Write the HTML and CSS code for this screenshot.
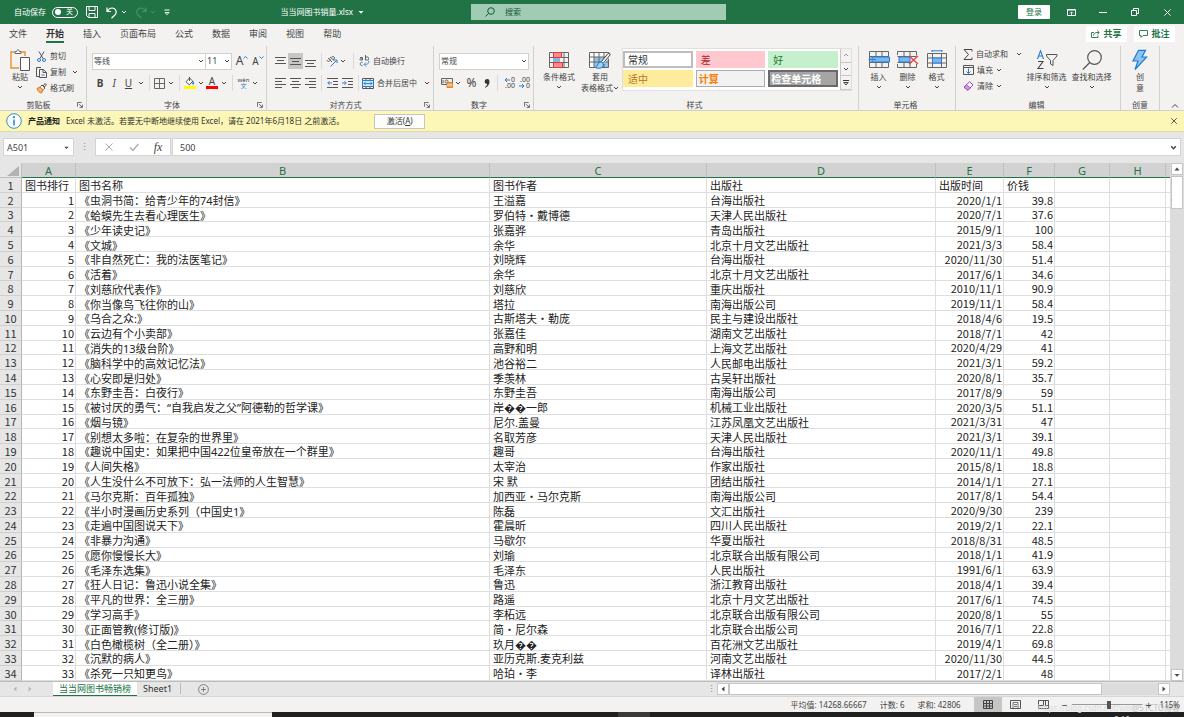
FILE: index.html
```html
<!DOCTYPE html>
<html lang="zh-CN">
<head>
<meta charset="utf-8">
<title>当当网图书销量.xlsx</title>
<link rel="stylesheet" href="styles.css">
</head>
<body>
<svg class="sprite" aria-hidden="true">
  <symbol id="chev" viewBox="0 0 6 6"><path d="M1 2l2 2 2-2" fill="none" stroke="currentColor" stroke-width="1"/></symbol>
  <symbol id="tri-d" viewBox="0 0 6 6"><path d="M.5 2h5L3 4.800z" fill="currentColor"/></symbol>
  <symbol id="tri-u" viewBox="0 0 6 6"><path d="M.5 4.500h5L3 1.500z" fill="currentColor"/></symbol>
  <symbol id="tri-l" viewBox="0 0 6 6"><path d="M4.500 .5v5L1.500 3z" fill="currentColor"/></symbol>
  <symbol id="tri-r" viewBox="0 0 6 6"><path d="M1.500 .5v5L4.500 3z" fill="currentColor"/></symbol>
  <symbol id="launch" viewBox="0 0 7 7"><path d="M.5 5.500v-5h5M2.500 2.500l3.500 3.500M6.300 3v3.300H3" fill="none" stroke="#444" stroke-width=".9"/></symbol>
  <symbol id="close" viewBox="0 0 10 10"><path d="M1.500 1.500l7 7M8.500 1.500l-7 7" fill="none" stroke="currentColor" stroke-width="1"/></symbol>
</svg>

<header class="titlebar">
  <div class="title-left">
    <span id="autosave">自动保存</span>
    <button class="toggle" aria-labelledby="autosave"><i class="knob"></i><span>关</span></button>
    <button class="tb" aria-label="保存"><svg width="12" height="12" viewBox="0 0 12 12" fill="none" stroke="#fff"><path d="M.5.500h11v11h-9l-2-2zM3 .5v4h6v-4M3 11.500v-4h6v4"/></svg></button>
    <button class="tb undo" aria-label="撤消"><svg width="12" height="13" viewBox="0 0 12 13" fill="none" stroke="#fff" stroke-width="1.200"><path d="M1 1.500v4h4M1.300 5.200C3 2.500 6 1.300 8.500 2.800c2.500 1.700 2 4.700.2 6.400L5.500 12.300"/></svg><svg width="6" height="6"><use href="#chev"/></svg></button>
    <button class="tb redo" aria-label="恢复"><svg width="12" height="13" viewBox="0 0 12 13" fill="none" stroke="#4a8f69" stroke-width="1.200"><path d="M11 1.500v4H7M10.700 5.200C9 2.500 6 1.300 3.500 2.800 1 4.500 1.500 7.500 3.300 9.200l3.200 3.100"/></svg><svg width="6" height="6"><use href="#chev"/></svg></button>
    <button class="tb" aria-label="自定义快速访问工具栏"><svg width="6" height="7" viewBox="0 0 6 7"><path d="M.5 1h5" stroke="#fff"/><path d="M1 3.500h4L3 5.800z" fill="none" stroke="#fff" stroke-width=".9"/></svg></button>
    <button class="doc-title">当当网图书销量.xlsx <svg width="6" height="6"><use href="#tri-d"/></svg></button>
  </div>
  <label class="search">
    <svg width="10" height="10" viewBox="0 0 10 10" fill="none" stroke="#17583a"><circle cx="6" cy="4" r="3.300"/><path d="M3.600 6.400L.5 9.500"/></svg>
    <input type="text" placeholder="搜索" aria-label="搜索">
  </label>
  <div class="title-right">
    <button class="login">登录</button>
    <button class="win" aria-label="功能区显示选项"><svg width="9" height="7" viewBox="0 0 9 7" fill="none" stroke="#fff"><path d="M.5.500h8v6h-8zM.5 1h8"/><path d="M4.500 6V3M3 4.300l1.500-1.500L6 4.300" stroke-width=".8"/></svg></button>
    <button class="win" aria-label="最小化"><svg width="8" height="8" viewBox="0 0 8 8"><path d="M0 4.500h8" stroke="#fff"/></svg></button>
    <button class="win" aria-label="还原"><svg width="8" height="8" viewBox="0 0 8 8" fill="none" stroke="#fff"><path d="M.5 2.500h5v5h-5zM2.500 2V.5h5v5H6"/></svg></button>
    <button class="win" aria-label="关闭"><svg width="9" height="9"><use href="#close"/></svg></button>
  </div>
</header>

<nav class="tabs">
  <button>文件</button><button class="on">开始</button><button>插入</button><button>页面布局</button><button>公式</button><button>数据</button><button>审阅</button><button>视图</button><button>帮助</button>
  <div class="tabs-right">
    <button class="pill"><svg width="9" height="8" viewBox="0 0 9 8" fill="none" stroke="#217346" stroke-width=".9"><path d="M3 2.500H.5v5h6.500V5.500M2.500 5.500C2.800 3.500 4 2.500 6 2.500h2M6.300.600l2 1.900-2 1.900"/></svg>共享</button>
    <button class="pill"><svg width="9" height="8" viewBox="0 0 9 8" fill="none" stroke="#217346" stroke-width=".9"><path d="M.5.500h8v5H4l-2 2v-2H.5z"/></svg>批注</button>
  </div>
</nav>

<section class="ribbon">
  <div class="group g-clip">
    <div class="body">
      <button class="big paste"><svg width="20" height="22" viewBox="0 0 20 22" fill="none"><path d="M4.500 3H1v16h8M11.500 3H15v4" stroke="#e8912d" stroke-width="1.400"/><path d="M5 4.500v-2h1.500C6.500.500 9.500.500 9.500 2.500H11v2z" fill="#fff" stroke="#666"/><path d="M10.500 8.500h9v13h-9z" fill="#fff" stroke="#555"/></svg><span>粘贴</span><svg width="6" height="6"><use href="#chev"/></svg></button>
      <div class="stack">
        <button class="item"><svg width="11" height="11" viewBox="0 0 11 11" fill="none"><path d="M3 .5l4 7M8 .5l-4 7" stroke="#555"/><circle cx="3" cy="9" r="1.500" stroke="#2b7cd3"/><circle cx="8" cy="9" r="1.500" stroke="#2b7cd3"/></svg>剪切</button>
        <button class="item"><svg width="11" height="11" viewBox="0 0 11 11" fill="none" stroke="#555"><path d="M3 9.500H.5v-9H5M3.500 2.500h4l3 3v5h-7zM7 2.500v3h3.500"/><path d="M5.500 8h3" stroke="#2b7cd3"/></svg>复制 <svg width="6" height="6"><use href="#chev"/></svg></button>
        <button class="item"><svg width="11" height="11" viewBox="0 0 11 11" fill="none"><path d="M1 5.500l3-1.500 3 3-1.500 3c-1.500.500-4-2.500-4.500-4.500z" fill="#f4b26b" stroke="#d8741d"/><path d="M4.500 3.500l1.500-1.500 3 3-1.500 1.500M7 3l2-2.500 1.500 1.500L8 4" stroke="#555"/></svg>格式刷</button>
      </div>
    </div>
    <div class="cap"><span>剪贴板</span><svg width="6" height="6"><use href="#launch"/></svg></div>
  </div>

  <div class="group g-font">
    <div class="body rows">
      <div class="row">
        <label class="combo c-name"><select aria-label="字体"><option>等线</option></select><svg width="6" height="6"><use href="#chev"/></svg></label><label class="combo c-size"><select aria-label="字号"><option>11</option></select><svg width="6" height="6"><use href="#chev"/></svg></label>
        <button class="ic letter big-a" aria-label="增大字号">A<svg width="5" height="5" viewBox="0 0 5 5"><path d="M.5 3.500l2-2 2 2" fill="none" stroke="#2b7cd3"/></svg></button>
        <button class="ic letter" aria-label="减小字号">A<svg width="5" height="5" viewBox="0 0 5 5"><path d="M.5 1.500l2 2 2-2" fill="none" stroke="#2b7cd3"/></svg></button>
      </div>
      <div class="row fmt">
        <button class="ic bold">B</button><button class="ic ital">I</button><button class="ic under">U</button><svg class="cv" width="6" height="6"><use href="#chev"/></svg><i class="sep"></i>
        <button class="ic" aria-label="边框"><svg width="11" height="11" viewBox="0 0 11 11" fill="none" stroke="#666"><path d="M.5.500h10v10H.5zM5.500 1v9M1 5.500h9"/></svg></button><svg class="cv" width="6" height="6"><use href="#chev"/></svg><i class="sep"></i>
        <button class="ic" aria-label="填充颜色"><svg width="12" height="12" viewBox="0 0 12 12"><path d="M5.500 1L2 4.800l3.300 3 3.500-3.600zM5.500 0v4" fill="#fff" stroke="#555"/><path d="M9 3.500c1.500 2 1.500 4 0 4s-.5-2 0-4z" fill="#2b7cd3"/><path d="M0 9h12v3H0z" fill="#ffff00"/></svg></button><svg class="cv" width="6" height="6"><use href="#chev"/></svg>
        <button class="ic fcolor" aria-label="字体颜色">A</button><svg class="cv" width="6" height="6"><use href="#chev"/></svg><i class="sep"></i>
        <button class="ic wen"><span>wén</span><b>文</b></button><svg class="cv" width="6" height="6"><use href="#chev"/></svg>
      </div>
    </div>
    <div class="cap"><span>字体</span><svg width="6" height="6"><use href="#launch"/></svg></div>
  </div>

  <div class="group g-align">
    <div class="body rows">
      <div class="row">
        <button class="al" aria-label="顶端对齐"><svg width="11" height="11" viewBox="0 0 11 11" stroke="#555"><path d="M0 1.500h11M2 4.500h7M0 7.500h11"/></svg></button><button class="al sel" aria-label="垂直居中"><svg width="11" height="11" viewBox="0 0 11 11" stroke="#555"><path d="M0 2.500h11M2 5.500h7M0 8.500h11"/></svg></button><button class="al" aria-label="底端对齐"><svg width="11" height="11" viewBox="0 0 11 11" stroke="#555"><path d="M0 4.500h11M2 7.500h7M0 10.500h11"/></svg></button><i class="sep"></i>
        <button class="ic" aria-label="方向"><svg width="12" height="11" viewBox="0 0 12 11" fill="none"><path d="M1 4a1.600 1.600 0 1 0 2.500-1.500M2 2l4 4M4 1l4 3.500M5.500 1.500a1.500 1.500 0 1 1 1.500 2" stroke="#555" stroke-width=".9"/><path d="M4.500 10.500l6-6M8 4h3v3" stroke="#2b7cd3"/></svg></button><svg class="cv" width="6" height="6"><use href="#chev"/></svg><i class="sep wide"></i>
        <button class="item"><svg width="11" height="12" viewBox="0 0 11 12" fill="none" stroke="#555" stroke-width=".9"><path d="M1 2.500h2.500V5H1.500C.500 5 .5 3.800 1.500 3.800h2M6.500 0v5h2c1.500 0 1.500-3 0-3h-2M3.500 7.500c-3-1-3 4 0 3"/><path d="M9.500 5.500c1 2.500-.5 4-4 4M7 7.500l-2 2 2 2" stroke="#2b7cd3"/></svg>自动换行</button>
      </div>
      <div class="row">
        <button class="al" aria-label="左对齐"><svg width="11" height="11" viewBox="0 0 11 11" stroke="#555"><path d="M0 .5h11M0 3.500h7M0 6.500h11M0 9.500h7"/></svg></button><button class="al" aria-label="居中"><svg width="11" height="11" viewBox="0 0 11 11" stroke="#555"><path d="M0 .5h11M2 3.500h7M0 6.500h11M2 9.500h7"/></svg></button><button class="al" aria-label="右对齐"><svg width="11" height="11" viewBox="0 0 11 11" stroke="#555"><path d="M0 .5h11M4 3.500h7M0 6.500h11M4 9.500h7"/></svg></button><i class="sep"></i>
        <button class="al" aria-label="减少缩进"><svg width="11" height="11" viewBox="0 0 11 11" fill="none" stroke="#555"><path d="M0 .5h11M6 3.500h5M6 6.500h5M0 9.500h11"/><path d="M5 5H1M2.500 3.200L.7 5l1.800 1.800" stroke="#2b7cd3"/></svg></button><button class="al" aria-label="增加缩进"><svg width="11" height="11" viewBox="0 0 11 11" fill="none" stroke="#555"><path d="M0 .5h11M6 3.500h5M6 6.500h5M0 9.500h11"/><path d="M0 5h4M2.500 3.200L4.300 5 2.500 6.800" stroke="#2b7cd3"/></svg></button><i class="sep"></i>
        <button class="item merge"><svg width="12" height="11" viewBox="0 0 12 11" fill="none"><path d="M.5.500h11v10H.5zM4 .5v2M8 .5v2M4 8.500v2M8 8.500v2" stroke="#555"/><path d="M.5 2.500h11v6H.5z" fill="#cfe6f8" stroke="#2b7cd3"/><path d="M2 5.500h8M3.500 4L2 5.500 3.500 7M8.500 4L10 5.500 8.500 7" stroke="#2b7cd3" stroke-width=".9"/></svg>合并后居中</button><svg class="cv push" width="6" height="6"><use href="#chev"/></svg>
      </div>
    </div>
    <div class="cap"><span>对齐方式</span><svg width="6" height="6"><use href="#launch"/></svg></div>
  </div>

  <div class="group g-num">
    <div class="body rows">
      <div class="row"><label class="combo c-num"><select aria-label="数字格式"><option>常规</option></select><svg width="6" height="6"><use href="#chev"/></svg></label></div>
      <div class="row numrow">
        <button class="ic" aria-label="会计数字格式"><svg width="12" height="10" viewBox="0 0 12 10" fill="none"><path d="M.5.500h11v6H.5zM2 5.500v-3.500M4 3.500a1.500 1.500 0 1 0 3 0 1.500 1.500 0 1 0-3 0" stroke="#555" stroke-width=".9"/><path d="M6 4.500h5.500v5H6z" fill="#f0a04b" stroke="#d8741d" stroke-width=".8"/><path d="M6 7h5.500" stroke="#fff" stroke-width=".7"/></svg></button><svg class="cv" width="6" height="6"><use href="#chev"/></svg>
        <button class="ic pct">%</button><button class="ic comma" aria-label="千位分隔样式"><svg width="6" height="9" viewBox="0 0 6 9"><path d="M3 0a2.500 2.500 0 0 1 2.500 2.600C5.500 5.500 4 7.800 1.200 8.800L1 8c1.300-.8 2-1.700 2.200-3A2.400 2.400 0 1 1 3 0z" fill="#333"/></svg></button><i class="sep"></i>
        <button class="ic dec" aria-label="增加小数位数"><span><svg width="6" height="6" viewBox="0 0 6 6"><path d="M6 3H1M3 1L1 3l2 2" fill="none" stroke="#2b7cd3"/></svg>0</span><span>.00</span></button><button class="ic dec" aria-label="减少小数位数"><span>.00</span><span><svg width="6" height="6" viewBox="0 0 6 6"><path d="M0 3h5M3 1l2 2-2 2" fill="none" stroke="#2b7cd3"/></svg>0</span></button>
      </div>
    </div>
    <div class="cap"><span>数字</span><svg width="6" height="6"><use href="#launch"/></svg></div>
  </div>

  <div class="group g-style">
    <div class="body">
      <button class="big"><svg width="20" height="20" viewBox="0 0 20 20" fill="none"><path d="M.5 2.500h19v15H.5zM5 2.500v15M10 2.500v15M15 2.500v15M.5 7.500h19M.5 12.500h19" stroke="#666"/><path d="M4.500 2.500h8v5h-8zM4.500 12.500h9v5h-9z" fill="#ff8c8c" stroke="#e03c3c"/><path d="M4.500 8h5v4h-5z" fill="#7ab8ee"/></svg><span>条件格式</span><svg width="6" height="6"><use href="#chev"/></svg></button>
      <button class="big tablefmt"><svg width="22" height="20" viewBox="0 0 22 20" fill="none"><path d="M.5 2.500h19v15H.5z" fill="#fff"/><path d="M5 7h14.500v10.500H5z" fill="#8cc4f0"/><path d="M.5 2.500h19v15H.5zM5 2.500v15M10 2.500v15M15 2.500v15M.5 7h19M.5 12h19" stroke="#666"/><path d="M20.500 4.500l-7 8.500" stroke="#f3f2f1" stroke-width="3.600"/><path d="M21 5l-6.500 8M19 3.500l-6.500 8M21 5c.8-1.200-.8-2.500-2-1.500" stroke="#444"/><path d="M13 12c-4-.5-4 3.500-6.500 5.500 3 1.500 8 1 8-3.500z" fill="#9fd0f5" stroke="#1f6fb8"/></svg><span>套用</span><span class="inline">表格格式<svg width="6" height="6"><use href="#chev"/></svg></span></button>
      <div class="gallery">
        <div class="swatches">
          <button class="sw normal">常规</button><button class="sw bad">差</button><button class="sw good">好</button>
          <button class="sw neutral">适中</button><button class="sw calc">计算</button><button class="sw check">检查单元格</button>
        </div>
        <div class="gscroll">
          <button aria-label="上一行"><svg width="6" height="6" viewBox="0 0 6 6"><path d="M1 4l2-2 2 2" fill="none" stroke="#999"/></svg></button>
          <button aria-label="下一行"><svg width="6" height="6"><use href="#chev"/></svg></button>
          <button aria-label="其他"><svg width="6" height="6" viewBox="0 0 6 6"><path d="M0 .5h6" stroke="#333"/><path d="M.8 2.500h4.400L3 5z" fill="none" stroke="#333" stroke-width=".9"/></svg></button>
        </div>
      </div>
    </div>
    <div class="cap"><span>样式</span></div>
  </div>

  <div class="group g-cell">
    <div class="body">
      <button class="big"><svg width="22" height="20" viewBox="0 0 22 20" fill="none"><path d="M1.500 1.500h19v16h-19zM8 1.500v16M14 1.500v16M1.500 6.500h19M1.500 12.500h19" stroke="#666"/><path d="M4 7h17.500v5H4z" fill="#7ab8ee" stroke="#2b7cd3"/><path d="M8 9.500H1M4 6.500l-3 3 3 3" stroke="#2b7cd3"/></svg><span>插入</span><svg width="6" height="6"><use href="#chev"/></svg></button>
      <button class="big"><svg width="22" height="20" viewBox="0 0 22 20" fill="none"><path d="M.5 5V1.500h19v4M.5 14v3.500h19V14M7 1.500V6M13 1.500V6M7 13v4.500M13 13v4.500M.5 6.500h19M.5 12.500h14" stroke="#666"/><path d="M2 7h11v5H2z" fill="#7ab8ee" stroke="#2b7cd3"/><path d="M12 6l9 8M21 6l-9 8" stroke="#e84040" stroke-width="1.300"/></svg><span>删除</span><svg width="6" height="6"><use href="#chev"/></svg></button>
      <button class="big"><svg width="20" height="20" viewBox="0 0 20 20" fill="none"><path d="M.5 3.500h19v14H.5zM5.500 3.500v14M14.500 3.500v14M.5 8h19M.5 13h19" stroke="#666"/><path d="M5.500 8h9v5h-9z" fill="#7ab8ee" stroke="#2b7cd3"/><path d="M5 .8h10M5 0v2M15 0v2" stroke="#2b7cd3"/></svg><span>格式</span><svg width="6" height="6"><use href="#chev"/></svg></button>
    </div>
    <div class="cap"><span>单元格</span></div>
  </div>

  <div class="group g-edit">
    <div class="body">
      <div class="stack edit">
        <button class="item"><svg width="10" height="11" viewBox="0 0 10 11"><path d="M9 2.500V.5H1l4.500 5L1 10.500h8v-2" fill="none" stroke="#444"/></svg>自动求和 <svg class="far" width="6" height="6"><use href="#chev"/></svg></button>
        <button class="item"><svg width="11" height="10" viewBox="0 0 11 10" fill="none"><path d="M.5.500h10v9H.5zM.5 2.500h10" stroke="#555"/><path d="M5.500 3.500v5M3.500 6.500l2 2 2-2" stroke="#2b7cd3"/></svg>填充<svg width="6" height="6"><use href="#chev"/></svg></button>
        <button class="item"><svg width="11" height="10" viewBox="0 0 11 10"><path d="M6.500.8l3.500 3-5 5.400-4-3z" fill="#fff" stroke="#9b3fb0"/><path d="M3.500 3.900l3.800 3L5 9.300l-4-3z" fill="#d59be0" stroke="#9b3fb0" stroke-width=".8"/></svg>清除<svg width="6" height="6"><use href="#chev"/></svg></button>
      </div>
      <button class="big"><svg width="22" height="20" viewBox="0 0 22 20" fill="none"><path d="M1.500 9L4.500.8 7.500 9M2.500 6h4" stroke="#2b7cd3" stroke-width="1.100"/><path d="M2 11.500h5L2 18.500h5.500" stroke="#444" stroke-width="1.100"/><path d="M10.500 4.500h10.500v1.500l-4 4.500v5l-2.500-1.500v-3.500l-4-4.500z" stroke="#555"/></svg><span>排序和筛选</span><svg width="6" height="6"><use href="#chev"/></svg></button>
      <button class="big"><svg width="20" height="20" viewBox="0 0 20 20" fill="none" stroke="#555" stroke-width="1.200"><circle cx="12.500" cy="7.500" r="6.800"/><path d="M7.800 12.500L.8 19.500"/></svg><span>查找和选择</span><svg width="6" height="6"><use href="#chev"/></svg></button>
    </div>
    <div class="cap"><span>编辑</span></div>
  </div>

  <div class="group g-idea">
    <div class="body"><button class="big"><svg width="16" height="21" viewBox="0 0 16 21"><path d="M6.500.8h7l-3.500 6.700h4.800L3 20l3-8.500H1z" fill="#8cc4f0" stroke="#1f7bd0" stroke-width="1.200"/></svg><span>创</span><span>意</span></button></div>
    <div class="cap"><span>创意</span></div>
  </div>
  <button class="collapse" aria-label="折叠功能区"><svg width="8" height="6" viewBox="0 0 8 6"><path d="M1 4.500l3-3 3 3" fill="none" stroke="#444"/></svg></button>
</section>

<div class="notice">
  <svg width="16" height="16" viewBox="0 0 16 16"><circle cx="8" cy="8" r="7.300" fill="#fff" stroke="#2d8ecb"/><path d="M8 6.500v6" stroke="#2d8ecb" stroke-width="1.600"/><circle cx="8" cy="4.200" r="1.100" fill="#2d8ecb"/></svg>
  <strong>产品通知</strong>
  <span>Excel 未激活。若要无中断地继续使用 Excel，请在 2021年6月18日 之前激活。</span>
  <button class="activate">激活(<u>A</u>)</button>
  <button class="dismiss" aria-label="关闭通知"><svg width="8" height="8"><use href="#close"/></svg></button>
</div>

<div class="formula">
  <label class="namebox"><input type="text" value="A501" aria-label="名称框"><svg width="5" height="5"><use href="#tri-d"/></svg></label>
  <span class="grip">⋮</span>
  <div class="fx">
    <button aria-label="取消"><svg width="10" height="10"><use href="#close"/></svg></button>
    <button aria-label="输入"><svg width="10" height="10" viewBox="0 0 10 10"><path d="M1 5.500l3 3L9.300 2" fill="none" stroke="#aaa" stroke-width="1.300"/></svg></button>
    <button class="fn"><i>fx</i></button>
  </div>
  <label class="entry"><input type="text" value="500" aria-label="编辑栏"><svg width="7" height="7" viewBox="0 0 6 6"><path d="M1 2l2 2 2-2" fill="none" stroke="#444" stroke-width="1.300"/></svg></label>
</div>

<main class="sheet">
  <div class="grid">
    <table>
      <colgroup><col class="w-n"><col class="w-a"><col><col class="w-c"><col class="w-d"><col class="w-e"><col class="w-f"><col class="w-g"><col class="w-h"><col class="w-i"></colgroup>
      <thead><tr><th class="corner"><svg width="13" height="10" viewBox="0 0 13 10"><path d="M13 0v10H1z" fill="#b3b3b3"/></svg></th><th>A</th><th>B</th><th>C</th><th>D</th><th>E</th><th>F</th><th>G</th><th>H</th><th class="edge"></th></tr></thead>
      <tbody id="rows"></tbody>
    </table>
  </div>
  <div class="vscroll">
    <button aria-label="向上滚动"><svg width="6" height="6"><use href="#tri-u"/></svg></button>
    <div class="vthumb"></div>
    <button class="end" aria-label="向下滚动"><svg width="6" height="6"><use href="#tri-d"/></svg></button>
  </div>
</main>

<div class="sheettabs">
  <div class="navs"><svg width="6" height="6"><use href="#tri-l"/></svg><svg width="6" height="6"><use href="#tri-r"/></svg></div>
  <button class="stab on">当当网图书畅销榜</button>
  <button class="stab">Sheet1</button>
  <i class="bar"></i>
  <button class="add" aria-label="新工作表"><svg width="11" height="11" viewBox="0 0 11 11" fill="none" stroke="#777" stroke-width=".9"><circle cx="5.500" cy="5.500" r="4.900"/><path d="M5.500 3v5M3 5.500h5"/></svg></button>
  <div class="hscroll">
    <span class="grip">⋮</span>
    <button aria-label="向左滚动"><svg width="6" height="6"><use href="#tri-l"/></svg></button>
    <div class="track"><div class="hthumb"></div></div>
    <button aria-label="向右滚动"><svg width="6" height="6"><use href="#tri-r"/></svg></button>
  </div>
</div>

<footer class="status">
  <span>平均值: 14268.66667</span><span>计数: 6</span><span>求和: 42806</span>
  <div class="views">
    <button class="on" aria-label="普通"><svg width="10" height="9" viewBox="0 0 10 9" fill="none" stroke="#444"><path d="M.5.500h9v8h-9zM3.500.500v8M6.500.500v8M.5 3.500h9M.5 6h9"/></svg></button>
    <button aria-label="页面布局"><svg width="11" height="9" viewBox="0 0 11 9" fill="none" stroke="#555"><path d="M.5.500h10v8H.5z"/><path d="M3 2.500h5v6H3zM4 4.500h3M4 6.500h3" stroke-width=".8"/></svg></button>
    <button aria-label="分页预览"><svg width="11" height="9" viewBox="0 0 11 9" fill="none" stroke="#555"><path d="M.5.500h10v8H.5zM.5 5.500h5v-5M7.500.500v5h3"/></svg></button>
  </div>
  <div class="zoom"><button>−</button><input type="range" min="0" max="100" value="53" aria-label="缩放"><button>+</button><span>115%</span></div>
  <div class="mark"><span>https://blog.csdn.net/wei</span><b>@51CTO博客</b></div>
</footer>
<div class="taskbar"><div class="open"></div><div class="active"></div><span>9:19</span></div>
<script src="rows.js"></script>
</body>
</html>
```
FILE: styles.css
```css
* { box-sizing: border-box; }
html, body { height: 100%; }
body {
  margin: 0;
  display: flex;
  flex-direction: column;
  overflow: hidden;
  background: #e6e6e6;
  color: #444;
  font: 8px/12px "Noto Sans", "Noto Sans CJK SC", sans-serif;
}
button, input, select { font: inherit; color: inherit; border: 0; margin: 0; padding: 0; background: none; outline: 0; }
button { display: flex; align-items: center; justify-content: center; white-space: nowrap; }
svg { flex: none; display: block; }
select { appearance: none; }
.sprite { display: none; }

.titlebar { flex: 0 0 24px; display: flex; align-items: center; background: #217346; color: #fff; }
.title-left { flex: 0 0 471px; display: flex; align-items: center; gap: 8px; padding-left: 14px; }
.title-left #autosave { margin-right: -2px; }
.toggle { width: 26px; height: 11px; border: 1px solid #fff; border-radius: 6px; justify-content: space-between; padding: 0 4px 0 2px; font-size: 7px; }
.knob { width: 6px; height: 6px; border-radius: 50%; background: #fff; }
.tb { gap: 3px; }
.redo { color: #4a8f69; }
.doc-title { margin: 0 107px 0 auto; gap: 5px; }
.search { flex: 0 1 255px; height: 16px; display: flex; align-items: center; gap: 10px; padding-left: 14px; background: #9fccb2; color: #17583a; }
.search input { flex: 1; min-width: 0; }
.search input::placeholder { color: #17583a; opacity: 1; }
.title-right { margin-left: auto; display: flex; align-items: center; padding-right: 1px; }
.login { width: 32px; height: 14px; background: #fff; color: #217346; border-radius: 1px; margin-right: 5px; }
.win { width: 32px; height: 24px; }

.tabs { flex: 0 0 22px; display: flex; align-items: flex-start; gap: 19px; padding: 2px 9px 0; background: #f3f2f1; font-size: 9px; }
.tabs > button { height: 17px; border-bottom: 2px solid transparent; }
.tabs > .on { font-weight: bold; border-color: #217346; color: #333; }
.tabs-right { margin-left: auto; display: flex; gap: 7px; }
.pill { width: 41px; height: 16px; gap: 3px; background: #fff; color: #217346; font-weight: bold; border-radius: 1px; }

.ribbon { flex: 0 0 65px; display: flex; background: #f3f2f1; border-bottom: 1px solid #d2d0ce; }
.group { display: flex; flex-direction: column; border-right: 1px solid #d2d0ce; }
.body { flex: 0 0 53px; display: flex; align-items: flex-start; }
.rows { flex-direction: column; gap: 4px; padding-top: 6px; }
.row { height: 18px; display: flex; align-items: center; }
.cap { display: flex; align-items: center; padding: 0 3px 0 0; height: 11px; }
.cap span { flex: 1; text-align: center; }
.g-clip { flex: 0 0 87px; }
.g-font { flex: 0 0 180px; }
.g-align { flex: 0 0 167px; }
.g-num { flex: 0 0 100px; }
.g-style { flex: 1 0 325px; }
.g-cell { flex: 0 0 97px; }
.g-edit { flex: 0 0 165px; }
.g-idea { flex: 0 0 39px; }
.big { flex-direction: column; justify-content: flex-start; padding-top: 3px; line-height: 11px; }
.big > svg:first-child { height: 22px; }
.big > svg:last-child { margin-top: 2px; }
.paste { padding-left: 8px; width: 32px; }
.stack { display: flex; flex-direction: column; padding: 4px 0 0 4px; gap: 4px; align-items: flex-start; }
.item { gap: 3px; height: 12px; }
.item svg:last-child:not(:first-child) { margin-left: 3px; }
.stack.edit { padding: 2px 0 0 7px; gap: 4px; width: 68px; }
.edit .item svg:last-child { margin-left: 0; }
.edit .item .far:last-child { margin-left: 5px; }
.combo { position: relative; display: flex; align-items: center; height: 17px; background: #fff; border: 1px solid #d2d0ce; }
.combo select { width: 100%; height: 15px; padding-left: 1px; }
.combo svg { position: absolute; right: 1px; }
.c-name { width: 114px; margin-left: 5px; }
.c-size { width: 26px; margin-right: 2px; border-left: 0; font-size: 9px; }
.c-num { width: 90px; margin-left: 5px; }
.ic { min-width: 13px; height: 16px; }
.letter { width: 16px; font-size: 10px; align-items: center; }
.letter svg { align-self: flex-start; margin-top: 2px; }
.big-a { font-size: 12px; }
.cv { margin: 0 2px; }
.sep { width: 1px; height: 16px; background: #dcdad8; margin: 0 3px; }
.fmt { padding-left: 6px; font-size: 10px; }
.fmt .bold { font-weight: bold; width: 14px; }
.ital { font-style: italic; width: 14px; }
.under { text-decoration: underline; width: 15px; }
.fcolor { height: 12px; border-bottom: 3px solid #f00; line-height: 9px; width: 12px; min-width: 0; margin-right: 1px; }
.wen { flex-direction: column; font-size: 6px; line-height: 6px; margin-left: 1px; }
.wen b { color: #2b7cd3; font-weight: normal; }
.al { width: 15px; height: 16px; }
.g-align .row { padding-left: 6px; }
.al.sel { background: #c8c6c4; }
.sep.wide { margin: 0 5px; }
.push { margin-left: 7px; }
.numrow { padding-left: 6px; }
.pct { font-size: 12px; width: 17px; }
.comma { width: 14px; }
.dec { flex-direction: column; align-items: flex-end; width: 15px; padding-right: 1px; font-size: 7px; line-height: 6px; }
.dec span { display: flex; align-items: center; gap: 1px; }

.g-style .body { padding-left: 6px; }
.g-style .big { width: 38px; }
.g-style .tablefmt { width: 44px; }
.inline { display: flex; align-items: center; }
.gallery { flex: 1; display: flex; margin: 2px 6px 0 0; height: 43px; border: 1px solid #e1dfdd; background: #fff; }
.swatches { flex: 1; display: grid; grid-template-columns: repeat(3, 1fr); grid-template-rows: 17px 17px; gap: 2px 3px; padding: 2px 2px 0 0; }
.sw { justify-content: flex-start; padding-left: 4px; font-size: 10px; border: 1px solid transparent; }
.normal { border: 2px solid #bdbdbd; color: #333; padding-left: 3px; }
.bad { background: #ffc7ce; color: #b3262e; }
.good { background: #c6efce; color: #1c7a2a; }
.neutral { background: #ffeb9c; color: #b07a1e; }
.calc { background: #f2f2f2; border-color: #adadad; color: #fa7d00; font-weight: bold; padding-left: 2px; }
.check { background: #a5a5a5; border: 2px solid #6a6a6a; color: #fff; font-weight: bold; padding-left: 1px; }
.gscroll { width: 11px; display: flex; flex-direction: column; border-left: 1px solid #c8c6c4; }
.gscroll button { flex: 1; border-bottom: 1px solid #c8c6c4; background: #f3f2f1; }
.g-cell .body { padding-left: 5px; }
.g-cell .big { width: 29px; }
.g-edit .big { width: 45px; }
.g-idea .cap { padding: 0; }
.g-idea .body { justify-content: center; }
.collapse { flex: 0 0 24px; align-self: flex-end; padding: 0 0 1px 6px; }

.notice { flex: 0 0 21px; display: flex; align-items: center; gap: 6px; padding: 0 6px; background: #fcf7b6; border-bottom: 1px solid #e0dba8; color: #333; }
.notice strong { color: #222; }
.activate { width: 51px; height: 15px; margin-left: 24px; background: #fdfdfd; border: 1px solid #c6c6c6; }
.dismiss { margin-left: auto; }

.formula { flex: 0 0 31px; display: flex; align-items: center; padding: 0 3px 1px; font-size: 9px; }
.formula input { flex: 1; min-width: 0; height: 16px; }
.namebox, .fx, .entry { display: flex; align-items: center; height: 18px; background: #fff; border: 1px solid #d4d4d4; }
.namebox { width: 71px; padding: 0 4px 0 3px; color: #444; }
.formula .grip { width: 21px; text-align: center; }
.grip { color: #888; }
.fx { width: 76px; justify-content: space-around; color: #aaa; }
.fn { font: italic 12px/14px "Liberation Serif", serif; color: #444; }
.entry { flex: 1; margin-left: 1px; padding: 0 3px 0 7px; }

.sheet { flex: 1; min-height: 0; display: flex; }
.grid { flex: 1; min-width: 0; background: #fff; }
table { width: 100%; height: 100%; table-layout: fixed; border-collapse: separate; border-spacing: 0; color: #222; font-size: 11px; line-height: 11px; }
.w-n { width: 22px; } .w-a { width: 54px; } .w-c { width: 217px; } .w-d { width: 229px; } .w-e { width: 68px; }
.w-f { width: 51px; } .w-g { width: 55px; } .w-h { width: 56px; } .w-i { width: 4px; }
th, td { padding: 1px 2px 0; border-right: 1px solid #dedede; border-bottom: 1px solid #dedede; white-space: nowrap; font-weight: normal; }
td { padding: 2px 2px 0 3px; text-align: left; }
td.num { padding: 1px 1px 0; text-align: right; font-family: "Noto Sans CJK SC", sans-serif; }
thead th { height: 15px; background: #d2d2d2; color: #217346; border-color: #bfbfbf; border-bottom-color: #217346; }
thead .corner { background: #e6e6e6; border-bottom-color: #bfbfbf; }
.corner svg { margin-left: 4px; }
tbody th { padding: 1px 0 0; background: #e6e6e6; border-color: #cfcfcf; border-right-color: #b5b5b5; color: #333; text-align: center; font-family: "Noto Sans CJK SC", sans-serif; }
.edge { padding: 0; border-right: 0; }

.vscroll { flex: 0 0 14px; display: flex; flex-direction: column; padding: 0 1px; background: #dcdcdc; }
.vscroll button { height: 12px; background: #fff; border: 1px solid #c6c6c6; }
.vthumb { height: 33px; margin-top: 1px; background: #fff; border: 1px solid #c6c6c6; }
.vscroll .end { margin-top: auto; }

.sheettabs { flex: 0 0 15px; display: flex; align-items: stretch; border-top: 1px solid #bdbdbd; background: #e6e6e6; font-size: 9px; }
.navs { width: 53px; display: flex; align-items: center; gap: 9px; padding-left: 12px; color: #b8b8b8; }
.stab { padding: 0 6px; color: #333; }
.stab.on { background: #fff; color: #217346; border-bottom: 1px solid #217346; }
.bar { width: 1px; height: 11px; margin: 1px 17px 0 2px; background: #bbb; }
.hscroll { margin-left: auto; flex: 0 0 479px; display: flex; align-items: center; padding-right: 14px; }
.hscroll .grip { width: 12px; text-align: center; }
.hscroll button { width: 12px; height: 12px; background: #fff; border: 1px solid #c6c6c6; }
.track { flex: 1; height: 12px; background: #dcdcdc; }
.hthumb { width: 87%; height: 12px; background: #fff; border: 1px solid #c6c6c6; }

.status { position: relative; flex: 0 0 16px; display: flex; align-items: center; justify-content: flex-end; gap: 13px; padding-right: 4px; background: #f3f2f1; border-top: 1px solid #d6d6d6; }
.views { display: flex; }
.views button { width: 28px; height: 15px; }
.views .on { background: #c8c6c4; }
.zoom { position: relative; z-index: 1; display: flex; align-items: center; gap: 3px; margin-left: -10px; }
.zoom button { width: 8px; font-size: 10px; }
.zoom span { margin-left: 4px; }
.zoom input { appearance: none; width: 70px; height: 12px; background: linear-gradient(#999, #999) center / 100% 1px no-repeat; }
.zoom input::-webkit-slider-thumb { appearance: none; width: 4px; height: 8px; background: #555; }
.mark { position: absolute; right: 4px; bottom: -2px; display: flex; color: #dcdcdc; white-space: nowrap; pointer-events: none; }
.mark b { color: #c2c2c2; font-weight: normal; }

.taskbar { flex: 0 0 5px; display: flex; overflow: hidden; background: #202020; color: #ddd; }
.open { width: 238px; margin-left: 34px; background: #f3f2f1; border-top: 1px solid #bbb; }
.active { width: 32px; margin-left: 346px; background: #3a3a3a; }
.taskbar span { margin: 2px 54px 0 auto; }
```
FILE: rows.js
```js
const books = `《虫洞书简：给青少年的74封信》|王溢嘉|台海出版社|2020/1/1|39.8
《蛤蟆先生去看心理医生》|罗伯特・戴博德|天津人民出版社|2020/7/1|37.6
《少年读史记》|张嘉骅|青岛出版社|2015/9/1|100
《文城》|余华|北京十月文艺出版社|2021/3/3|58.4
《非自然死亡：我的法医笔记》|刘晓辉|台海出版社|2020/11/30|51.4
《活着》|余华|北京十月文艺出版社|2017/6/1|34.6
《刘慈欣代表作》|刘慈欣|重庆出版社|2010/11/1|90.9
《你当像鸟飞往你的山》|塔拉|南海出版公司|2019/11/1|58.4
《乌合之众:》|古斯塔夫・勒庞|民主与建设出版社|2018/4/6|19.5
《云边有个小卖部》|张嘉佳|湖南文艺出版社|2018/7/1|42
《消失的13级台阶》|高野和明|上海文艺出版社|2020/4/29|41
《脑科学中的高效记忆法》|池谷裕二|人民邮电出版社|2021/3/1|59.2
《心安即是归处》|季羡林|古吴轩出版社|2020/8/1|35.7
《东野圭吾：白夜行》|东野圭吾|南海出版公司|2017/8/9|59
《被讨厌的勇气：“自我启发之父”阿德勒的哲学课》|岸��一郎|机械工业出版社|2020/3/5|51.1
《烟与镜》|尼尔.盖曼|江苏凤凰文艺出版社|2021/3/31|47
《别想太多啦：在复杂的世界里》|名取芳彦|天津人民出版社|2021/3/1|39.1
《趣说中国史：如果把中国422位皇帝放在一个群里》|趣哥|台海出版社|2020/11/1|49.8
《人间失格》|太宰治|作家出版社|2015/8/1|18.8
《人生没什么不可放下：弘一法师的人生智慧》|宋 默|团结出版社|2014/1/1|27.1
《马尔克斯：百年孤独》|加西亚・马尔克斯|南海出版公司|2017/8/1|54.4
《半小时漫画历史系列（中国史1》|陈磊|文汇出版社|2020/9/30|239
《走遍中国图说天下》|霍晨昕|四川人民出版社|2019/2/1|22.1
《非暴力沟通》|马歇尔|华夏出版社|2018/8/31|48.5
《愿你慢慢长大》|刘瑜|北京联合出版有限公司|2018/1/1|41.9
《毛泽东选集》|毛泽东|人民出版社|1991/6/1|63.9
《狂人日记：鲁迅小说全集》|鲁迅|浙江教育出版社|2018/4/1|39.4
《平凡的世界：全三册》|路遥|北京十月文艺出版社|2017/6/1|74.5
《学习高手》|李柘远|北京联合出版有限公司|2020/8/1|55
《正面管教(修订版)》|简・尼尔森|北京联合出版公司|2016/7/1|22.8
《白色橄榄树（全二册）》|玖月��|百花洲文艺出版社|2019/4/1|69.8
《沉默的病人》|亚历克斯.麦克利兹|河南文艺出版社|2020/11/30|44.5
《杀死一只知更鸟》|哈珀・李|译林出版社|2017/2/1|48`.split("\n").map(line => line.split("|"));

const body = document.getElementById("rows");
const columnCount = 9;
const numericColumns = new Set([0, 4, 5]);

function addRow(number, cells, isHead) {
  const tr = body.insertRow();
  const th = document.createElement("th");
  th.textContent = number;
  tr.append(th);
  for (let i = 0; i < columnCount; i++) {
    const td = tr.insertCell();
    td.textContent = cells[i] ?? "";
    if (!isHead && numericColumns.has(i)) td.className = "num";
  }
  tr.cells[columnCount].classList.add("edge");
}

addRow(1, ["图书排行", "图书名称", "图书作者", "出版社", "出版时间", "价钱"], true);
books.forEach((book, i) => addRow(i + 2, [i + 1, ...book], false));
```
